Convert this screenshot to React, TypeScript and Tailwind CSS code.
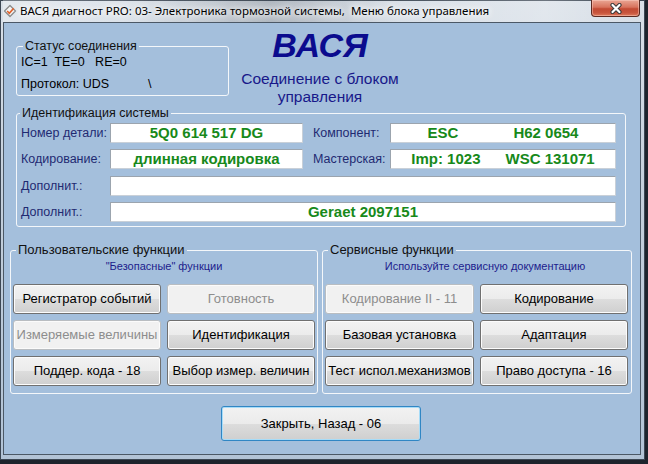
import React from "react";

type GroupProps = {
  title: string;
  legend: string;
  className: string;
  children: React.ReactNode;
};

function Group({ title, legend, className, children }: GroupProps) {
  return (
    <div className={`relative rounded-[3px] border border-[#f4f7fa] ${className}`}>
      <span
        className={`absolute -top-[8px] ${legend} bg-[#a4bfdc] px-[2px] leading-[14px] whitespace-nowrap text-[#111]`}
      >
        {title}
      </span>
      {children}
    </div>
  );
}

function WinButton({ label, disabled }: { label: string; disabled?: boolean }) {
  if (disabled) {
    return (
      <div className="flex h-[30px] items-center justify-center rounded-[3px] border border-[#b9bdc1] bg-[#f1f1f1] text-[13px] whitespace-nowrap text-[#8d8d8d] shadow-[inset_0_0_0_1px_#fbfbfb]">
        {label}
      </div>
    );
  }
  return (
    <div className="flex h-[30px] items-center justify-center rounded-[3px] border border-[#707070] bg-[linear-gradient(180deg,#f2f2f2_0%,#ebebeb_50%,#dddddd_50%,#cfcfcf_100%)] text-[13px] whitespace-nowrap text-black shadow-[inset_0_0_0_1px_#fcfcfc]">
      {label}
    </div>
  );
}

function Field({ className, children }: { className: string; children?: React.ReactNode }) {
  return (
    <div
      className={`flex h-[20px] items-center justify-center border border-[#c9d0d8] border-t-[#9ba4ae] border-l-[#9ba4ae] bg-white text-[15px] leading-[18px] font-bold whitespace-pre text-[#17891a] ${className}`}
    >
      {children}
    </div>
  );
}

const label = "text-[12.5px] leading-[14px] text-[#1f2a72] whitespace-nowrap";

const userButtons = [
  { label: "Регистратор событий" },
  { label: "Готовность", disabled: true },
  { label: "Измеряемые величины", disabled: true },
  { label: "Идентификация" },
  { label: "Поддер. кода - 18" },
  { label: "Выбор измер. величин" },
];

const serviceButtons = [
  { label: "Кодирование II - 11", disabled: true },
  { label: "Кодирование" },
  { label: "Базовая установка" },
  { label: "Адаптация" },
  { label: "Тест испол.механизмов" },
  { label: "Право доступа - 16" },
];

export default function App() {
  return (
    <div className="h-[464px] w-[648px] overflow-hidden bg-[#1e242d]">
      <div className="flex h-[460px] w-[645px] flex-col bg-[linear-gradient(180deg,#d9e0e8_0%,#c5d0dc_40%,#b2c3d6_100%)] pr-[4px] pb-[5px] pl-[3px] shadow-[inset_0_0_0_1px_#3c4754]">
        {/* title bar */}
        <div className="flex h-[22px] items-start bg-[linear-gradient(90deg,rgba(255,255,255,0.3)_0%,rgba(255,255,255,0.1)_20%,rgba(70,78,88,0.28)_42%,rgba(255,255,255,0.05)_62%,rgba(255,255,255,0.25)_85%,rgba(255,255,255,0)_100%)]">
          <svg className="mt-[4px]" width="14" height="14" viewBox="0 0 14 14">
            <path
              d="M7 1.5 L12.5 7 L7 12.5 L1.5 7 Z"
              fill="#f4f4f4"
              stroke="#8a8a8a"
              strokeWidth="1.3"
              strokeLinejoin="round"
            />
            <path d="M4.2 7 L6.3 9.2 L10.6 4.4" fill="none" stroke="#e0602a" strokeWidth="1.6" />
          </svg>
          <span className="mt-[3px] ml-[3px] font-['Noto_Sans',sans-serif] text-[11.5px] leading-[16px] whitespace-pre text-black [text-shadow:0_0_5px_#fff,0_0_9px_#fff,0_0_12px_#fff]">
            ВАСЯ диагност PRO: 03- Электроника тормозной системы,  Меню блока управления
          </span>
          <div className="mr-[1px] ml-auto flex h-[17px] w-[49px] items-center justify-center rounded-b-[4px] border border-t-0 border-[#5b2a22] bg-[linear-gradient(180deg,#eaa694_0%,#d8735d_45%,#c24a33_55%,#c8553d_80%,#df7a5c_100%)] shadow-[inset_0_0_0_1px_rgba(255,215,205,0.45)]">
            <svg width="14" height="11" viewBox="0 0 14 11">
              <path d="M3.5 2 L10.5 9 M10.5 2 L3.5 9" stroke="#3a3a3a" strokeWidth="4.2" strokeLinecap="round" />
              <path d="M3.5 2 L10.5 9 M10.5 2 L3.5 9" stroke="#fff" strokeWidth="2.2" strokeLinecap="round" />
            </svg>
          </div>
        </div>

        {/* client area */}
        <div className="flex-1 border border-[#4b5866] bg-[#a4bfdc] font-['Liberation_Sans',Arial,sans-serif]">
          <div className="flex h-[90px] items-start pl-[12px]">
            <Group title="Статус соединения" legend="left-[6px] text-[12.5px]" className="mt-[23px] h-[50px] w-[213px]">
              <div className="pt-[8px] pl-[4px] text-[12.5px] leading-[14px] text-black">
                <div className="whitespace-pre">IC=1  TE=0   RE=0</div>
                <div className="mt-[8px] flex">
                  <span className="w-[127px]">Протокол: UDS</span>
                  <span>\</span>
                </div>
              </div>
            </Group>
            <div className="mt-[5px] flex w-[182px] flex-col items-center">
              <div className="text-[34px] leading-[34px] font-bold italic text-[#0b0b8e]">ВАСЯ</div>
              <div className="mt-[8px] text-center text-[15.5px] leading-[18px] text-[#18188a]">
                Соединение с блоком
                <br />
                управления
              </div>
            </div>
          </div>

          <Group title="Идентификация системы" legend="left-[3px] text-[12.5px]" className="ml-[12px] h-[114px] w-[610px]">
            <div className="flex flex-col gap-[6px] pt-[9px]">
              <div className="flex items-center">
                <span className={`w-[93px] pl-[4px] ${label}`}>Номер детали:</span>
                <Field className="w-[193px]">5Q0 614 517 DG</Field>
                <span className={`ml-[10px] w-[77px] ${label}`}>Компонент:</span>
                <Field className="w-[226px] gap-[55px]">
                  <span>ESC</span>
                  <span>H62 0654</span>
                </Field>
              </div>
              <div className="flex items-center">
                <span className={`w-[93px] pl-[4px] ${label}`}>Кодирование:</span>
                <Field className="w-[193px]">длинная кодировка</Field>
                <span className={`ml-[10px] w-[77px] ${label}`}>Мастерская:</span>
                <Field className="w-[226px] gap-[25px]">
                  <span>Imp: 1023</span>
                  <span>WSC 131071</span>
                </Field>
              </div>
              <div className="mt-[1px] flex items-center">
                <span className={`w-[93px] pl-[4px] ${label}`}>Дополнит.:</span>
                <Field className="w-[506px]" />
              </div>
              <div className="flex items-center">
                <span className={`w-[93px] pl-[4px] ${label}`}>Дополнит.:</span>
                <Field className="w-[506px]">Geraet 2097151</Field>
              </div>
            </div>
          </Group>

          <div className="mt-[23px] flex pl-[6px]">
            <Group title="Пользовательские функции" legend="left-[5px] text-[13px]" className="h-[144px] w-[308px]">
              <div className="pt-[9px] text-center text-[11px] leading-[13px] text-[#1c1c8c]">
                "Безопасные" функции
              </div>
              <div className="mt-[11px] grid grid-cols-[148px_148px] gap-[6px] pl-[2px]">
                {userButtons.map((b) => (
                  <WinButton key={b.label} label={b.label} disabled={b.disabled} />
                ))}
              </div>
            </Group>
            <Group title="Сервисные функции" legend="left-[5px] text-[13px]" className="ml-[4px] h-[144px] w-[310px]">
              <div className="pt-[9px] pl-[16px] text-center text-[11px] leading-[13px] text-[#1c1c8c]">
                Используйте сервисную документацию
              </div>
              <div className="mt-[11px] grid grid-cols-[149px_148px] gap-[6px] pl-[2px]">
                {serviceButtons.map((b) => (
                  <WinButton key={b.label} label={b.label} disabled={b.disabled} />
                ))}
              </div>
            </Group>
          </div>

          <div className="mt-[12px] ml-[217px] flex h-[35px] w-[200px] items-center justify-center rounded-[3px] border border-[#3086c4] bg-[linear-gradient(180deg,#f2f2f2_0%,#ebebeb_50%,#dddddd_50%,#cfcfcf_100%)] text-[13px] text-black shadow-[inset_0_0_0_1px_#a7dcf8]">
            Закрыть, Назад - 06
          </div>
        </div>
      </div>
    </div>
  );
}
